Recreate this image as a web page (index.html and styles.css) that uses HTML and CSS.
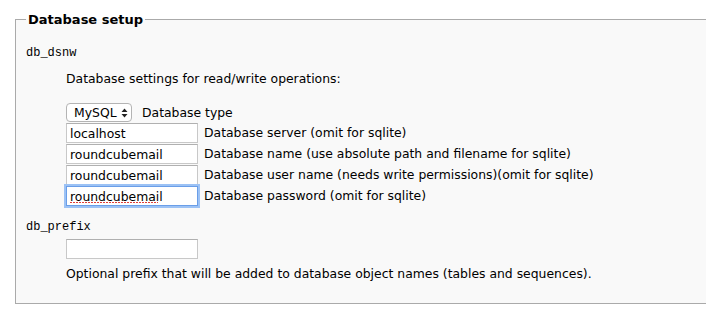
FILE: index.html
```html
<!DOCTYPE html>
<html lang="en">
<head>
    <meta charset="UTF-8">
    <title>Roundcube Webmail Installer</title>
    <link rel="stylesheet" href="styles.css">
</head>
<body>
    <fieldset class="setup">
        <legend>Database setup</legend>
        <dl class="configblock">
            <dt class="propname">db_dsnw</dt>
            <dd class="first">
                <p class="hint-top">Database settings for read/write operations:</p>
                <div class="row">
                    <span class="select-wrap">
                        <select name="_dbtype">
                            <option>MySQL</option>
                        </select>
                        <svg class="arrows" width="7" height="10" viewBox="0 0 7 10">
                            <path d="M0.5 4 L3.5 0.5 L6.5 4 Z M0.5 6 L3.5 9.5 L6.5 6 Z" fill="#222"/>
                        </svg>
                    </span>
                    <label>Database type</label>
                </div>
                <div class="row">
                    <input type="text" value="localhost">
                    <label>Database server (omit for sqlite)</label>
                </div>
                <div class="row">
                    <input type="text" value="roundcubemail">
                    <label>Database name (use absolute path and filename for sqlite)</label>
                </div>
                <div class="row">
                    <input type="text" value="roundcubemail">
                    <label>Database user name (needs write permissions)(omit for sqlite)</label>
                </div>
                <div class="row">
                    <input type="text" class="focused" value="roundcubemail">
                    <label>Database password (omit for sqlite)</label>
                </div>
            </dd>

            <dt class="propname">db_prefix</dt>
            <dd>
                <div class="row">
                    <input type="text" class="plain" value="">
                </div>
                <p class="hint">Optional prefix that will be added to database object names (tables and sequences).</p>
            </dd>
        </dl>
    </fieldset>
</body>
</html>
```

FILE: styles.css
```css
body {
    font-family: "DejaVu Sans", Verdana, sans-serif;
    font-size: 12.4px;
    color: #000;
    background-color: #fff;
    margin: 0;
    padding: 12px 0 0 0;
}

.setup {
    margin: 0 0 0 15px;
    padding: 0 10px 21px 10px;
    border: 1px solid #aaa;
    border-right: none;
    background-color: #f9f9f9;
}

.setup legend {
    font-size: 13px;
    font-weight: bold;
    padding: 0 2px;
}

.configblock {
    margin: 0;
    padding-top: 18px;
}

.propname {
    font-family: "Liberation Mono", "Courier New", monospace;
    font-size: 12px;
    line-height: 16px;
}

.configblock dd {
    margin: 0 0 0 40px;
}

.configblock dd.first {
    margin-bottom: 13px;
}

.hint-top {
    margin: 10px 0 16px 0;
    line-height: 16px;
}

.hint {
    margin: 7px 0 0 0;
    line-height: 16px;
}

.row {
    display: flex;
    align-items: center;
    gap: 6px;
    margin-bottom: 1px;
}

.row label {
    line-height: 16px;
}

.select-wrap {
    position: relative;
    display: inline-block;
    margin-right: 4px;
}

select {
    appearance: none;
    -webkit-appearance: none;
    font-family: "DejaVu Sans", Verdana, sans-serif;
    font-size: 12.4px;
    height: 19px;
    width: 66px;
    padding: 0 0 0 7px;
    border: 1px solid #b4b4b4;
    border-radius: 4px;
    background-color: #fff;
    color: #000;
    display: block;
}

.arrows {
    position: absolute;
    right: 4px;
    top: 5px;
    pointer-events: none;
}

input[type="text"] {
    font-family: "DejaVu Sans", Verdana, sans-serif;
    font-size: 12.4px;
    width: 132px;
    height: 20px;
    box-sizing: border-box;
    padding: 0 3px;
    border: 1px solid #c8c8c8;
    border-top-color: #b0b0b0;
    background-color: #fff;
    color: #000;
    margin: 0;
}

/* focused field with the spell-check dots under the word */
input.focused {
    border: 1px solid #6a9ee8;
    box-shadow: 0 0 0 2px #9cc2f5;
    outline: none;
    background: repeating-linear-gradient(to right, #e0403a 0 2px, transparent 2px 3px) no-repeat 3px 15px / 88px 1px, #fff;
}

input.plain {
    margin-top: 4px;
}
```
